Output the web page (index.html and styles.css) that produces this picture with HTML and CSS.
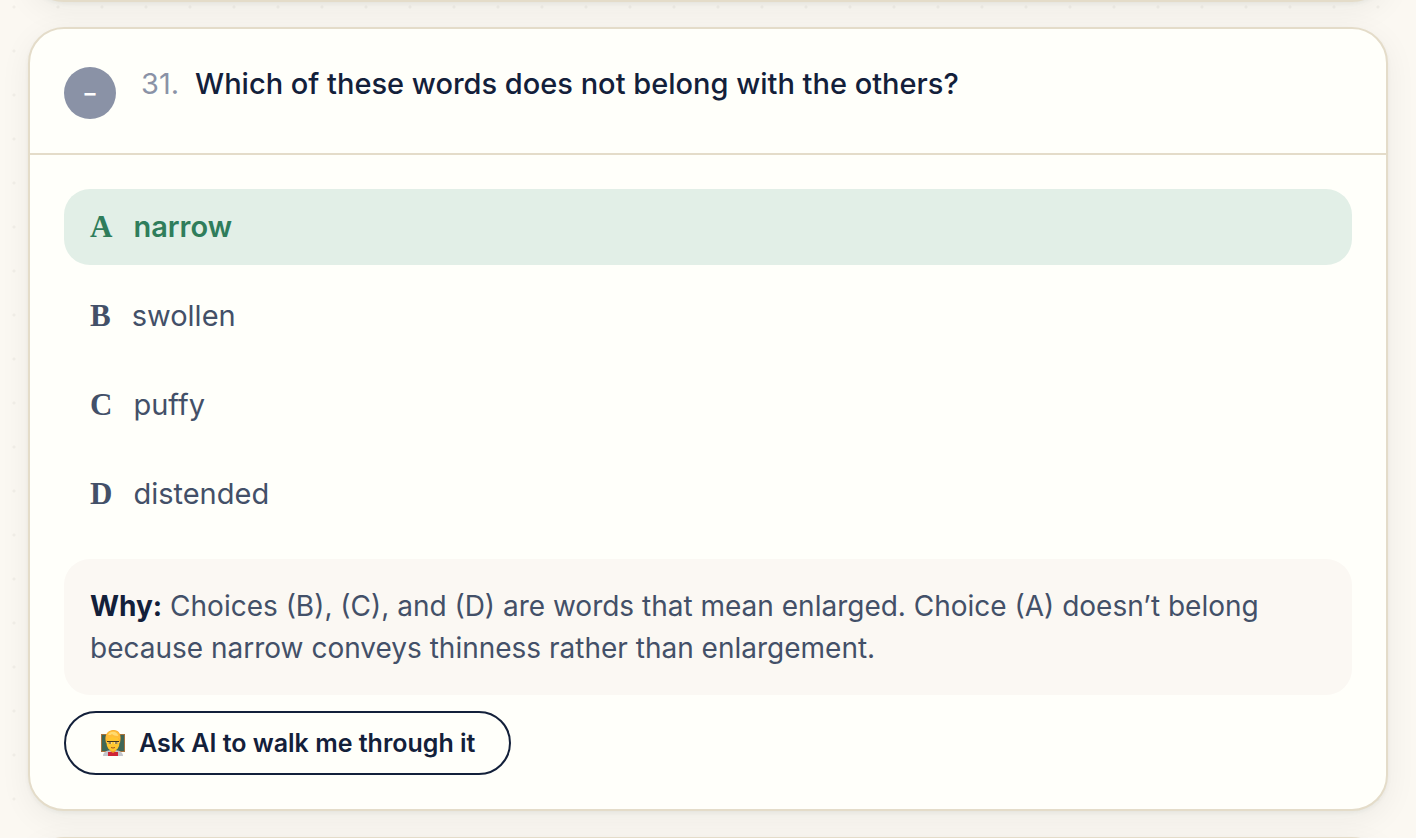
FILE: index.html
```
<!DOCTYPE html>
<html lang="en">
<head>
    <meta charset="UTF-8">
    <meta name="viewport" content="width=device-width, initial-scale=1.0">
    <title>Answer Review</title>
    <link rel="stylesheet" href="styles.css">
</head>
<body>
    <main class="review-list">
        <div class="card card-prev"></div>

        <article class="card">
            <header class="card-header">
                <span class="status">–</span>
                <h2 class="question"><span class="number">31.</span>Which of these words does not belong with the others?</h2>
            </header>
            <div class="card-body">
                <ul class="options">
                    <li class="option correct"><span class="letter">A</span><span class="word">narrow</span></li>
                    <li class="option"><span class="letter">B</span><span class="word">swollen</span></li>
                    <li class="option"><span class="letter">C</span><span class="word">puffy</span></li>
                    <li class="option"><span class="letter">D</span><span class="word">distended</span></li>
                </ul>
                <p class="why"><strong>Why:</strong> Choices (B), (C), and (D) are words that mean enlarged. Choice (A) doesn’t belong because narrow conveys thinness rather than enlargement.</p>
                <button class="ask-button" type="button">
                    <svg class="teacher" viewBox="0 0 26 26" aria-hidden="true">
                        <rect x="1" y="4" width="24" height="18" fill="#a8733c"/>
                        <rect x="2" y="5" width="22" height="16" fill="#3f6656"/>
                        <path d="M3 26c0-4 4-6 10-6s10 2 10 6z" fill="#c4c6cc"/>
                        <path d="M8 22h10v4H8z" fill="#cf2436"/>
                        <path d="M10 18h6v3l-3 2-3-2z" fill="#eda024"/>
                        <path d="M6 13C4 5 7 1 13 0c6 0 9 4 7 13z" fill="#f3a428"/>
                        <ellipse cx="13" cy="13" rx="6.500" ry="8" fill="#ffc62f"/>
                        <path d="M6 11C5 4 8 0.500 13 0.500c5 0 8 4 7 10L18 8c-3 0-5-1-6-2-1 2-4 2-6 5z" fill="#ffbd38"/>
                        <path d="M8 5c1-3 4-4 7-3 2 1 3 2 3 4-3 0-5-1-6-2-1 1-2 1-4 1z" fill="#ffdb70"/>
                        <path d="M7.500 11.500h4.500v2.500H8zM14 11.500h4.500L18 14h-4z" fill="#ffd97a"/>
                        <path d="M7 11.500h5l2 0h5M8.500 13h2.500M15 13h2.500" fill="none" stroke="#3f3524" stroke-width="1"/>
                        <path d="M11 17.500q2 1 4 0" fill="none" stroke="#a4521c" stroke-width="1"/>
                    </svg>
                    <span>Ask AI to walk me through it</span>
                </button>
            </div>
        </article>

        <div class="card card-next"></div>
    </main>
</body>
</html>
```

FILE: styles.css
```
* {
    margin: 0;
    padding: 0;
    box-sizing: border-box;
}

:root {
    --paper: #fffffa;
    --page: #fbf8f2;
    --line: #e4dcc9;
    --ink: #13203a;
    --text: #435068;
    --muted: #8a92a6;
    --green: #2f7d5b;
    --green-bg: #e2efe7;
}

body {
    height: 100vh;
    overflow: hidden;
    background-color: var(--page);
    background-image: radial-gradient(circle, #f1eee8 1px, transparent 2px);
    background-size: 44px 44px;
    background-position: -8px -15px;
    color: var(--text);
    font-family: Inter, "Liberation Sans", sans-serif;
    font-size: 28px;
    line-height: 42px;
}

.review-list {
    display: flex;
    flex-direction: column;
    height: calc(100vh + 98px);
    margin-top: -98px;
    padding: 0 28px;
    overflow: hidden;
}

.card {
    flex-shrink: 0;
    background: var(--paper);
    border: 2px solid var(--line);
    border-radius: 36px;
    box-shadow: 0 2px 4px rgba(19, 32, 40, 0.05), 0 8px 32px rgba(19, 32, 40, 0.06);
}

/* neighbouring questions, only their edges are in view */
.card-prev,
.card-next {
    height: 100px;
}

.card-prev {
    margin-bottom: 25px;
}

.card-next {
    margin-top: 26px;
}

.card-header {
    display: flex;
    align-items: flex-start;
    gap: 25px;
    padding: 34px;
    border-bottom: 2px solid var(--line);
}

.status {
    display: flex;
    flex-shrink: 0;
    align-items: center;
    justify-content: center;
    width: 52px;
    height: 52px;
    margin-top: 4px;
    border-radius: 50%;
    background: var(--muted);
    color: #fff;
    font-size: 22px;
    font-weight: 700;
}

.question {
    color: var(--ink);
    font-size: 29px;
    font-weight: 500;
}

.number {
    margin-right: 16px;
    color: var(--muted);
    font-weight: 400;
}

.card-body {
    padding: 34px;
}

.options {
    display: flex;
    flex-direction: column;
    gap: 13px;
    list-style: none;
}

.option {
    display: flex;
    align-items: center;
    gap: 21px;
    padding: 17px 26px;
    border-radius: 26px;
}

.option.correct {
    background: var(--green-bg);
    color: var(--green);
    font-weight: 600;
}

.word {
    font-size: 29px;
}

.letter {
    font-family: "Liberation Serif", serif;
    font-size: 31px;
    font-weight: 700;
}

.why {
    margin: 27px 0 16px;
    padding: 26px;
    border-radius: 26px;
    background: #fbf8f3;
}

.why strong {
    color: var(--ink);
    font-weight: 700;
}

.ask-button {
    display: flex;
    align-items: center;
    gap: 13px;
    height: 64px;
    padding: 0 34px;
    border: 2px solid var(--ink);
    border-radius: 32px;
    background: transparent;
    color: var(--ink);
    font-family: inherit;
    font-size: 25px;
    font-weight: 600;
    cursor: pointer;
}

.teacher {
    width: 26px;
    height: 26px;
}
```
